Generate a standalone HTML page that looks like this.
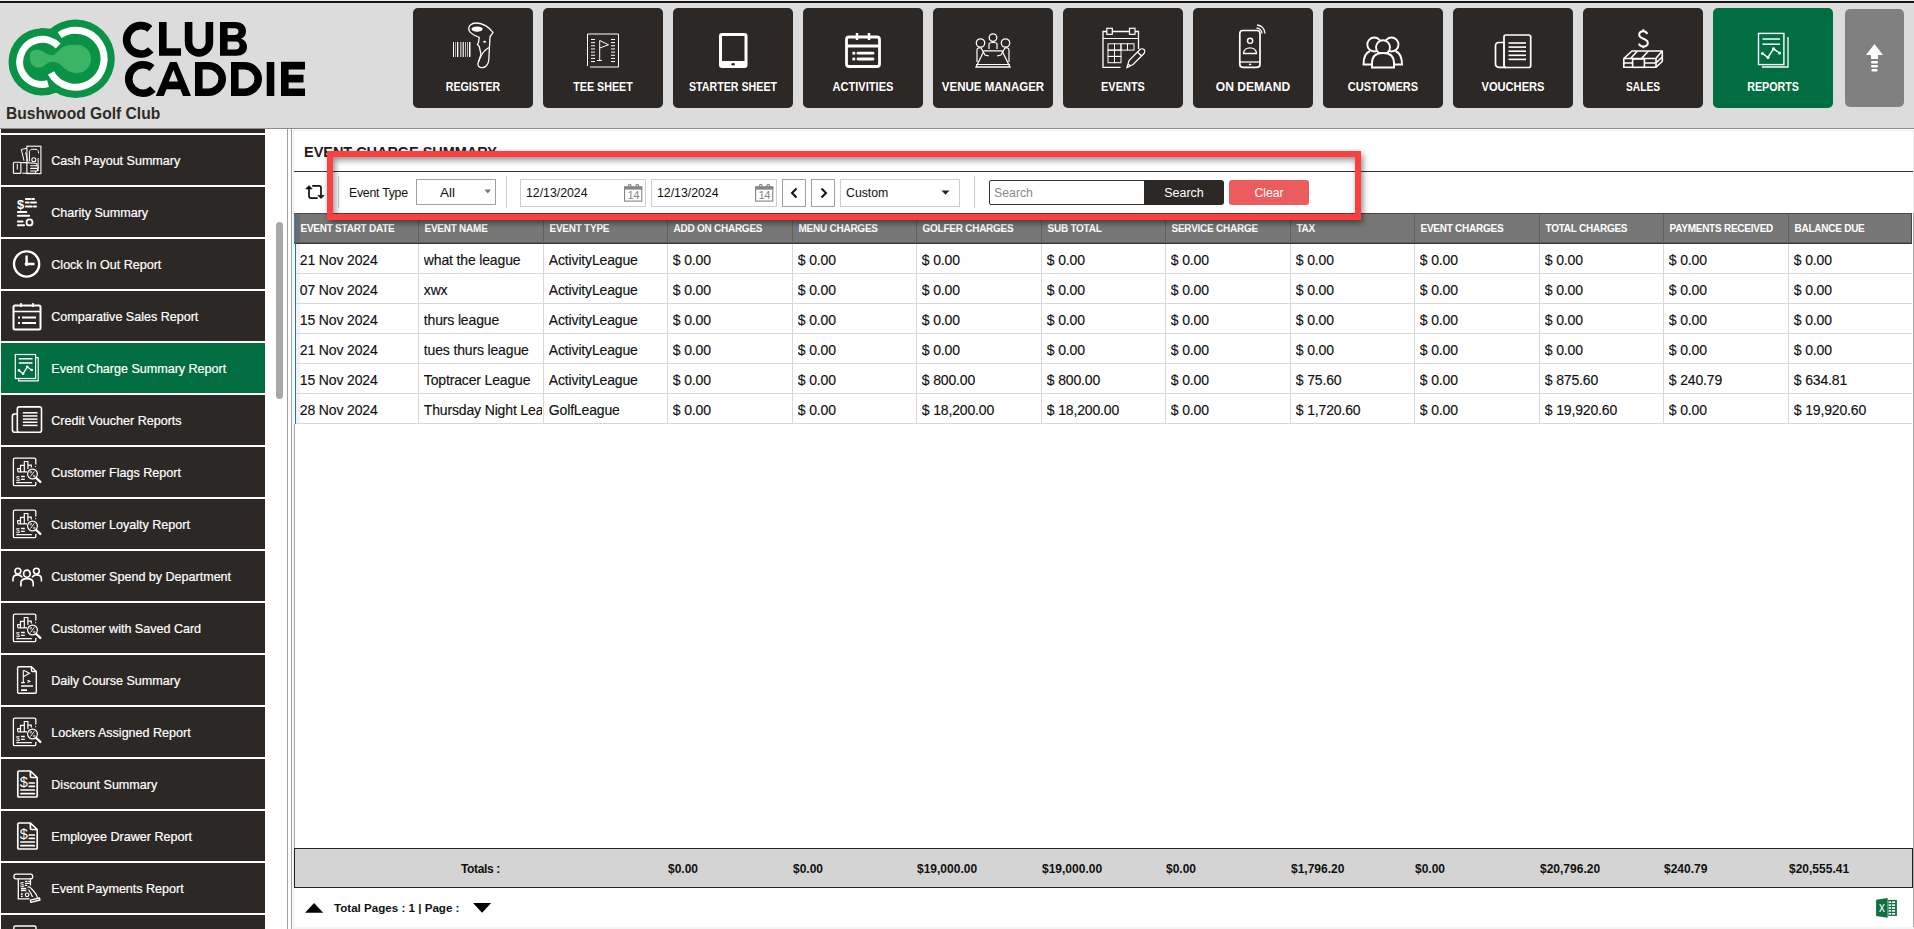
<!DOCTYPE html>
<html><head><meta charset="utf-8"><style>
*{margin:0;padding:0;box-sizing:border-box}
html,body{width:1914px;height:929px;overflow:hidden;background:#fff;font-family:"Liberation Sans", sans-serif}
.abs{position:absolute}
.nb{position:absolute;top:8px;width:120px;height:100px;border-radius:5px}
.nl{position:absolute;left:-20px;right:-20px;top:71px;text-align:center;color:#fff;font-size:13px;font-weight:bold;transform:scaleX(0.83);white-space:nowrap}
.si{position:absolute;left:1px;width:264px;height:50px}
.sl{position:absolute;left:50.3px;top:19px;color:#fff;font-size:12.6px;white-space:nowrap;letter-spacing:-0.03px;-webkit-text-stroke:0.2px #fff}
.th{position:absolute;top:223px;color:#fff;font-size:10px;font-weight:bold;white-space:nowrap;letter-spacing:-0.25px}
.td{position:absolute;height:30px;line-height:34px;color:#111;font-size:14px;letter-spacing:-0.15px;white-space:nowrap;overflow:hidden;-webkit-text-stroke:0.15px #111}
.tt{position:absolute;top:862px;font-size:12px;font-weight:bold;color:#111;white-space:nowrap}
.ft{position:absolute;font-size:11.6px;font-weight:bold;color:#111;white-space:nowrap}
.title{position:absolute;left:304px;top:144px;font-size:14.5px;font-weight:bold;color:#1f1c1a;white-space:nowrap;letter-spacing:-0.04px}
.lbl{position:absolute;font-size:12.3px;color:#111;white-space:nowrap}
.box{position:absolute;border:1px solid #ccc;background:#fff}
</style></head><body>
<div class="abs" style="left:0;top:0;width:1914px;height:1px;background:#f0f0f0"></div>
<div class="abs" style="left:0;top:1px;width:1914px;height:2px;background:#141414"></div>
<div class="abs" style="left:0;top:3px;width:1914px;height:125px;background:#dcdcdc"></div>
<div class="abs" style="left:0;top:128px;width:1914px;height:1px;background:#8c8c8c"></div>
<svg class="abs" style="left:0;top:0" width="320" height="128">
<circle cx="42.2" cy="61.9" r="33.7" fill="#0a9246"/><circle cx="75.6" cy="58.7" r="39.2" fill="#0a9246"/>
<path d="M40 28.2 L52 28.8 L68 22 L68 95 L52 92 L40 95.6 Z" fill="#0a9246"/>
<path d="M58.2 45.9 A 22.6 22.6 0 1 0 48.05 83.73" fill="none" stroke="#fff" stroke-width="7"/>
<path d="M59.66 35.07 A 28.5 28.5 0 1 1 50.92 72.95" fill="none" stroke="#fff" stroke-width="7"/>
<path d="M30.2 53 C32 50 36 49.5 39.5 50 C43 50.8 47 55 52 55.2 C56 55.2 59 49 64 46.5 C68 45 72 44.8 77 44.8 C85 45 91 51 91 59 C91 67 85 73 77 73 C71 73 66 70.5 62 66 C59 63 56 61.7 52.5 61.7 C47 61.7 44 67.5 39 67.6 C33 67.6 30 63 30 59 C30 56 30 55 30.2 53 Z" fill="#3bb565"/>
<g fill="none" stroke="#000" stroke-width="7.6">
<path d="M149.93 28.92 A 14.2 14.2 0 1 0 150.84 49.84"/>
<path d="M162.8 22 V51.95 H181"/>
<path d="M188.6 22 V42.5 A 10.4 10.4 0 0 0 209.4 42.5 V22"/>
<path d="M152.03 68.12 A 14.2 14.2 0 1 0 152.94 89.04"/>
<path d="M198.8 62 V92.2 H208.5 A 13.7 13.2 0 0 0 208.5 65.8 H195"/>
<path d="M234.8 62 V92.2 H244.5 A 13.7 13.2 0 0 0 244.5 65.8 H231"/>
<path d="M270.5 62 V96"/>
<path d="M284.8 62 V96 M281 65.6 H305 M281 78.6 H303.5 M281 92.3 H305"/>
</g>
<path d="M220 22 H235 C243 22 246 26.5 246 31 C246 35 244 37.5 241 38.5 C245 40 247 43 247 47 C247 52 243.5 55.8 236 55.8 H220 Z M227.6 28.3 V35 H234.5 C237 35 238.5 34 238.5 31.6 C238.5 29.5 237 28.3 234.5 28.3 Z M227.6 41.5 V49.4 H235.5 C238.5 49.4 239.6 47.6 239.6 45.4 C239.6 43.2 238.3 41.5 235.5 41.5 Z" fill="#000" fill-rule="evenodd"/>
<path d="M155.8 96 L170 62 H176.8 L191 96 H183 L180.3 89.2 H166.5 L163.8 96 Z M168.8 81.5 H178 L173.4 70 Z" fill="#000" fill-rule="evenodd"/>
</svg>
<div class="abs" style="left:6px;top:105px;font-size:15.6px;font-weight:bold;color:#2e2a25;white-space:nowrap">Bushwood Golf Club</div>
<div class="nb" style="left:413px;background:#2c2826"><span class="nl" style="transform:scaleX(0.817)">REGISTER</span></div>
<div class="nb" style="left:543px;background:#2c2826"><span class="nl" style="transform:scaleX(0.825)">TEE SHEET</span></div>
<div class="nb" style="left:673px;background:#2c2826"><span class="nl" style="transform:scaleX(0.82)">STARTER SHEET</span></div>
<div class="nb" style="left:803px;background:#2c2826"><span class="nl" style="transform:scaleX(0.852)">ACTIVITIES</span></div>
<div class="nb" style="left:933px;background:#2c2826"><span class="nl" style="transform:scaleX(0.886)">VENUE MANAGER</span></div>
<div class="nb" style="left:1063px;background:#2c2826"><span class="nl" style="transform:scaleX(0.844)">EVENTS</span></div>
<div class="nb" style="left:1193px;background:#2c2826"><span class="nl" style="transform:scaleX(0.928)">ON DEMAND</span></div>
<div class="nb" style="left:1323px;background:#2c2826"><span class="nl" style="transform:scaleX(0.85)">CUSTOMERS</span></div>
<div class="nb" style="left:1453px;background:#2c2826"><span class="nl" style="transform:scaleX(0.856)">VOUCHERS</span></div>
<div class="nb" style="left:1583px;background:#2c2826"><span class="nl" style="transform:scaleX(0.784)">SALES</span></div>
<div class="nb" style="left:1713px;background:#006e40"><span class="nl" style="transform:scaleX(0.821)">REPORTS</span></div>
<svg class="abs" style="left:0;top:0" width="1914" height="130"><rect x="453" y="42" width="1" height="15" fill="#fff"/><rect x="455" y="42" width="0.8" height="15" fill="#bbb"/><rect x="457" y="42" width="1.3" height="15" fill="#fff"/><rect x="460" y="42" width="1.5" height="15" fill="#aaa"/><rect x="462.5" y="42" width="1.5" height="15" fill="#ccc"/><rect x="465" y="42" width="1" height="15" fill="#bbb"/><rect x="467" y="42" width="0.8" height="15" fill="#ddd"/><rect x="469" y="42" width="1.5" height="15" fill="#fff"/><path d="M469.3 31 C467.5 26 471 23 476.5 23 C483 23 489.5 27.5 493 32.5 L490 36.8 L489.4 48 L488.8 60 C488.5 65 485 67.7 482 67.7 C479 67.7 477.5 65.5 478 63.5 C478.5 60 480.5 57 481 54.2 L479.2 46.3 L477.4 44.5 L478.6 42.1 L479.2 37.3 C476 36 472 35 469.3 31 Z" stroke="#fff" fill="none" stroke-width="1.3"/><ellipse cx="477.1" cy="29.1" rx="5.6" ry="2.7" fill="#fff"/><ellipse cx="484.6" cy="41.8" rx="1.5" ry="1" fill="#fff"/><path d="M489 47.5 C485 50 482.5 53 481.6 55 C480 58 479 60 478.6 62" stroke="#fff" fill="none" stroke-width="1.2"/><path d="M587.5 34 H618.5 V67 H590 M587.5 34 V66" stroke="#fff" fill="none" stroke-width="1"/><line x1="591" y1="39.5" x2="595" y2="39.5" stroke="#fff" stroke-width="1"/><line x1="611" y1="39.5" x2="615" y2="39.5" stroke="#fff" stroke-width="1"/><line x1="591" y1="42.65" x2="595" y2="42.65" stroke="#fff" stroke-width="1"/><line x1="611" y1="42.65" x2="615" y2="42.65" stroke="#fff" stroke-width="1"/><line x1="591" y1="45.8" x2="595" y2="45.8" stroke="#fff" stroke-width="1"/><line x1="611" y1="45.8" x2="615" y2="45.8" stroke="#fff" stroke-width="1"/><line x1="591" y1="48.95" x2="595" y2="48.95" stroke="#fff" stroke-width="1"/><line x1="611" y1="48.95" x2="615" y2="48.95" stroke="#fff" stroke-width="1"/><line x1="591" y1="52.1" x2="595" y2="52.1" stroke="#fff" stroke-width="1"/><line x1="611" y1="52.1" x2="615" y2="52.1" stroke="#fff" stroke-width="1"/><line x1="591" y1="55.25" x2="595" y2="55.25" stroke="#fff" stroke-width="1"/><line x1="611" y1="55.25" x2="615" y2="55.25" stroke="#fff" stroke-width="1"/><line x1="591" y1="58.4" x2="595" y2="58.4" stroke="#fff" stroke-width="1"/><line x1="611" y1="58.4" x2="615" y2="58.4" stroke="#fff" stroke-width="1"/><line x1="591" y1="61.55" x2="595" y2="61.55" stroke="#fff" stroke-width="1"/><line x1="611" y1="61.55" x2="615" y2="61.55" stroke="#fff" stroke-width="1"/><path d="M599.7 40.5 V60.5 M597 60.5 H602 M599.7 40.5 L608.5 44.8 L599.7 48" stroke="#fff" fill="none" stroke-width="1"/><rect x="719" y="33" width="28.5" height="35" rx="3" fill="#fff"/><rect x="722" y="36" width="22.5" height="25" fill="#2c2826"/><ellipse cx="733.2" cy="64.2" rx="1.8" ry="1.2" fill="#2c2826"/><rect x="846.5" y="37" width="33" height="29.5" rx="2.5" stroke="#fff" fill="none" stroke-width="2.8"/><line x1="846.5" y1="46" x2="879.5" y2="46" stroke="#fff" stroke-width="2.8"/><line x1="857" y1="33" x2="857" y2="40" stroke="#fff" stroke-width="2.5"/><line x1="869" y1="33" x2="869" y2="40" stroke="#fff" stroke-width="2.5"/><rect x="852.4" y="51.8" width="2.8" height="2.8" fill="#fff"/><rect x="852.4" y="57.6" width="2.8" height="2.8" fill="#fff"/><line x1="858" y1="53.2" x2="873" y2="53.2" stroke="#fff" stroke-width="2.8" stroke-linecap="round"/><line x1="858" y1="59" x2="873" y2="59" stroke="#fff" stroke-width="2.8" stroke-linecap="round"/><circle cx="980.5" cy="43" r="4.2" stroke="#fff" fill="none" stroke-width="1.3"/><circle cx="993" cy="37.6" r="3.8" stroke="#fff" fill="none" stroke-width="1.3"/><circle cx="1005.5" cy="43" r="4.2" stroke="#fff" fill="none" stroke-width="1.3"/><path d="M989 49 V44 C989 42 997 42 997 44 V49" stroke="#fff" fill="none" stroke-width="1.2"/><path d="M984 50.8 H1002 L1010 67 H976 Z" stroke="#fff" fill="none" stroke-width="1.3"/><line x1="976" y1="64.5" x2="1010" y2="64.5" stroke="#fff" stroke-width="1"/><path d="M977 62 V50 C977 48 979 47.5 981 48 L985 55 L989 56 M1009 62 V50 C1009 48 1007 47.5 1005 48 L1001 55 L997 56" stroke="#fff" fill="none" stroke-width="1.2"/><path d="M1120.5 67.3 H1103 V31.5 H1138.5 V49" stroke="#fff" fill="none" stroke-width="1.3"/><line x1="1103" y1="38.5" x2="1138.5" y2="38.5" stroke="#fff" stroke-width="1.2"/><rect x="1106.8" y="28.3" width="5.5" height="6" fill="#2c2826" stroke="#fff" fill="none" stroke-width="1.2"/><rect x="1129.5" y="28.3" width="5.5" height="6" fill="#2c2826" stroke="#fff" fill="none" stroke-width="1.2"/><rect x="1108.0" y="43.8" width="6.5" height="6.3" stroke="#fff" fill="none" stroke-width="1"/><rect x="1114.5" y="43.8" width="6.5" height="6.3" stroke="#fff" fill="none" stroke-width="1"/><rect x="1121.0" y="43.8" width="6.5" height="6.3" stroke="#fff" fill="none" stroke-width="1"/><rect x="1127.5" y="43.8" width="6.5" height="6.3" stroke="#fff" fill="none" stroke-width="1"/><rect x="1108.0" y="50.099999999999994" width="6.5" height="6.3" stroke="#fff" fill="none" stroke-width="1"/><rect x="1114.5" y="50.099999999999994" width="6.5" height="6.3" stroke="#fff" fill="none" stroke-width="1"/><rect x="1108.0" y="56.4" width="6.5" height="6.3" stroke="#fff" fill="none" stroke-width="1"/><rect x="1114.5" y="56.4" width="6.5" height="6.3" stroke="#fff" fill="none" stroke-width="1"/><path d="M1127 67.5 L1129 60.5 L1140 49.5 C1141 48.5 1143 48.5 1144 49.5 C1145 50.5 1145 52.5 1144 53.5 L1133 64.5 Z M1128 64 L1131 66 M1137.5 52 L1141.5 56" stroke="#fff" fill="none" stroke-width="1.2"/><rect x="1239.8" y="30.5" width="20.2" height="36.8" rx="3" stroke="#fff" fill="none" stroke-width="1.7"/><line x1="1240" y1="62" x2="1260" y2="62" stroke="#fff" stroke-width="1.3"/><ellipse cx="1250.1" cy="64.4" rx="1.3" ry="0.8" fill="#fff"/><circle cx="1250.1" cy="40.8" r="2.6" stroke="#fff" fill="none" stroke-width="1.4"/><path d="M1243.6 53.5 C1243.6 46 1256.4 46 1256.4 53.5 Z" stroke="#fff" fill="none" stroke-width="1.4"/><path d="M1257 25 A 8.5 8.5 0 0 1 1265 33.5 M1256.5 28 A 5.5 5.5 0 0 1 1262 33.5" stroke="#fff" fill="none" stroke-width="1.3"/><circle cx="1374.3" cy="44.5" r="7" stroke="#fff" fill="none" stroke-width="1.9"/><circle cx="1391.5" cy="44.5" r="7" stroke="#fff" fill="none" stroke-width="1.9"/><path d="M1370 51 C1365 53 1363.5 58 1363.5 64.5 H1372 M1395.5 51 C1400.5 53 1402 58 1402 64.5 H1394" stroke="#fff" fill="none" stroke-width="1.9"/><circle cx="1383" cy="47.3" r="7" fill="#2c2826" stroke="#fff" fill="none" stroke-width="1.9"/><path d="M1372 67.5 V63 C1372 55.5 1377 53 1383 53 C1389 53 1394 55.5 1394 63 V67.5 Z" fill="#2c2826" stroke="#fff" fill="none" stroke-width="1.9"/><rect x="1504" y="35" width="26.7" height="32.5" rx="2" stroke="#fff" fill="none" stroke-width="1.7"/><path d="M1504 42.5 H1499 C1496.5 42.5 1495.5 44 1495.5 46 V64 C1495.5 66.5 1497 67.3 1499.5 67.3 H1506" stroke="#fff" fill="none" stroke-width="1.7"/><path d="M1504 42 V66" stroke="#fff" fill="none" stroke-width="1.2"/><line x1="1508.5" y1="43.0" x2="1526" y2="43.0" stroke="#fff" stroke-width="1.6"/><line x1="1508.5" y1="47.1" x2="1526" y2="47.1" stroke="#fff" stroke-width="1.6"/><line x1="1508.5" y1="51.2" x2="1526" y2="51.2" stroke="#fff" stroke-width="1.6"/><line x1="1508.5" y1="55.3" x2="1526" y2="55.3" stroke="#fff" stroke-width="1.6"/><line x1="1508.5" y1="59.4" x2="1526" y2="59.4" stroke="#fff" stroke-width="1.6"/><path d="M1647.3 34 C1646.5 32.2 1645 31.3 1643.3 31.3 C1640.8 31.3 1639.2 32.8 1639.2 34.8 C1639.2 37.2 1641.3 38 1643.5 38.7 C1646 39.5 1647.8 40.5 1647.8 43.1 C1647.8 45.2 1646 46.5 1643.3 46.5 C1641 46.5 1639.5 45.3 1638.8 43.6 M1643.3 29.3 V31.3 M1643.3 46.5 V48.3" stroke="#fff" fill="none" stroke-width="2"/><path d="M1623.8 58.5 L1632 51 H1662.3 L1655.8 58.5 Z M1637.5 51 L1630.5 58.5 M1648.5 51 L1641.5 58.5" stroke="#fff" fill="none" stroke-width="1.6" stroke-linejoin="round"/><path d="M1623.8 58.5 V67.3 H1656 L1662.6 61 M1623.8 63 H1656 L1662.6 56.5 M1656 58.5 V67.3 M1662.3 51 V61" stroke="#fff" fill="none" stroke-width="1.6"/><rect x="1632.6" y="59" width="11.8" height="8.3" fill="#2c2826" stroke="#fff" fill="none" stroke-width="1.6"/><path d="M1762 67 H1788 V37" stroke="#fff" fill="none" stroke-width="1.3"/><rect x="1758.5" y="33.4" width="25.4" height="31.2" stroke="#fff" fill="none" stroke-width="1.4"/><line x1="1762.5" y1="39" x2="1780" y2="39" stroke="#fff" stroke-width="1.5"/><line x1="1762.5" y1="44.2" x2="1780" y2="44.2" stroke="#fff" stroke-width="1.5"/><path d="M1762.5 53.5 L1768 57.5 L1773.5 48.8 L1779.5 53" stroke="#fff" fill="none" stroke-width="1.5"/><circle cx="1762.5" cy="53.5" r="1.6" fill="#fff"/><circle cx="1768" cy="57.5" r="1.6" fill="#fff"/><circle cx="1773.5" cy="48.8" r="1.6" fill="#fff"/><circle cx="1779.5" cy="53" r="1.6" fill="#fff"/></svg>
<div class="abs" style="left:1845px;top:9px;width:59px;height:98px;background:#808080;border-radius:5px"></div>
<svg class="abs" style="left:1845px;top:9px" width="59" height="98"><path d="M29.5 35 L38 46 H33 V50 H26 V46 H21 Z" fill="#fff"/><rect x="26" y="52" width="7" height="2.5" rx="1.2" fill="#fff"/><rect x="26" y="56" width="7" height="2.5" rx="1.2" fill="#fff"/><rect x="26.5" y="60" width="6" height="2.5" rx="1.2" fill="#fff"/></svg>
<div class="abs" style="left:1px;top:129px;width:264px;height:4px;background:#2c2826"></div>
<div class="si" style="top:135px;background:#2c2826"><span class="sl">Cash Payout Summary</span></div>
<div class="si" style="top:187px;background:#2c2826"><span class="sl">Charity Summary</span></div>
<div class="si" style="top:239px;background:#2c2826"><span class="sl">Clock In Out Report</span></div>
<div class="si" style="top:291px;background:#2c2826"><span class="sl">Comparative Sales Report</span></div>
<div class="si" style="top:343px;background:#006e40"><span class="sl">Event Charge Summary Report</span></div>
<div class="si" style="top:395px;background:#2c2826"><span class="sl">Credit Voucher Reports</span></div>
<div class="si" style="top:447px;background:#2c2826"><span class="sl">Customer Flags Report</span></div>
<div class="si" style="top:499px;background:#2c2826"><span class="sl">Customer Loyalty Report</span></div>
<div class="si" style="top:551px;background:#2c2826"><span class="sl">Customer Spend by Department</span></div>
<div class="si" style="top:603px;background:#2c2826"><span class="sl">Customer with Saved Card</span></div>
<div class="si" style="top:655px;background:#2c2826"><span class="sl">Daily Course Summary</span></div>
<div class="si" style="top:707px;background:#2c2826"><span class="sl">Lockers Assigned Report</span></div>
<div class="si" style="top:759px;background:#2c2826"><span class="sl">Discount Summary</span></div>
<div class="si" style="top:811px;background:#2c2826"><span class="sl">Employee Drawer Report</span></div>
<div class="si" style="top:863px;background:#2c2826"><span class="sl">Event Payments Report</span></div>
<div class="abs" style="left:1px;top:915px;width:264px;height:14px;background:#2c2826"></div>
<svg class="abs" style="left:0;top:0" width="270" height="929"><g transform="translate(0,0)"><rect x="26.9" y="146.2" width="14" height="27.4" fill="none" stroke="#fff" stroke-width="1.1"/><path d="M29.4 161.5 V151.6 C30 150 31 149.3 32 149.3 H36 C37.5 149.3 38.6 151 38.6 153.3" fill="none" stroke="#fff" stroke-width="1"/><circle cx="33.8" cy="159.8" r="2" fill="none" stroke="#fff" stroke-width="1.1"/><path d="M27 148.2 L21.3 149.5 L24 160.7 M25.6 152.5 L27.8 161.5" fill="none" stroke="#fff" stroke-width="1"/><path d="M38.1 158 V171" fill="none" stroke="#fff" stroke-width="1"/><rect x="13.4" y="162.2" width="7.5" height="11.2" rx="1" fill="none" stroke="#fff" stroke-width="1.1"/><path d="M17.3 163.8 V169.5" fill="none" stroke="#fff" stroke-width="1"/><path d="M20.9 162.8 L24 162.6 L35.5 163.2 C37 163.3 37.5 165 36 165.8 M30.2 165.8 H37.2 C38.6 165.8 38.6 168.4 37.2 168.4 H30.2 M30.2 168.4 H36.6 C38 168.4 38 171 36.6 171 H30.2 M22.2 173.2 H35.6 L36 171" fill="none" stroke="#fff" stroke-width="1.1"/></g><g transform="translate(0,0)"><text x="20.7" y="208.6" font-family="Liberation Sans" font-weight="bold" font-size="13" fill="#fff" text-anchor="middle">$</text><path d="M25.9 198.9 H30.2 M32.1 198.9 H34 M25.9 202.5 H28.7 M31 202.5 H36 M25.9 206.4 H31.7 M33.8 206.4 H36 M17.9 211.9 H26.3 M17.9 215.8 H29.1 M17.9 221.4 H22.6 M17.9 225.2 H24.1" fill="none" stroke="#fff" stroke-width="2" stroke-linecap="round"/><circle cx="29.5" cy="222.4" r="3" fill="none" stroke="#fff" stroke-width="1.8"/></g><circle cx="26.6" cy="264" r="12.6" fill="none" stroke="#fff" stroke-width="2.4"/><path d="M26.6 255.5 V264 H34.5" fill="none" stroke="#fff" stroke-width="2.4"/><circle cx="26.6" cy="264" r="2" fill="#fff"/><g transform="translate(12,302)"><rect x="1.5" y="3.5" width="27" height="24" rx="1.5" fill="none" stroke="#fff" stroke-width="2"/><line x1="1.5" y1="9.5" x2="28.5" y2="9.5" stroke="#fff" stroke-width="1.6"/><path d="M9 1 V5 M21 1 V5" fill="none" stroke="#fff" stroke-width="1.6"/><path d="M6 15.5 H8 M10 15.5 H24 M6 21 H8 M10 21 H24" fill="none" stroke="#fff" stroke-width="2"/></g><g transform="translate(0,0)"><rect x="15.3" y="354.5" width="20.3" height="24" fill="none" stroke="#fff" stroke-width="1.2"/><path d="M36 357.6 H38.2 V380.9 H18.6 V379" fill="none" stroke="#fff" stroke-width="1.1"/><path d="M18.8 358.8 H32.5 M18.8 362.9 H32.5" fill="none" stroke="#fff" stroke-width="1.5"/><path d="M19 370.4 L23.1 373.8 L27.2 366.9 L31.7 370" fill="none" stroke="#fff" stroke-width="1.3"/><circle cx="19" cy="370.4" r="1.3" fill="#fff"/><circle cx="23.1" cy="373.8" r="1.3" fill="#fff"/><circle cx="27.2" cy="366.9" r="1.3" fill="#fff"/><circle cx="31.7" cy="370" r="1.3" fill="#fff"/></g><rect x="17.3" y="406.9" width="24.2" height="25.4" rx="2" fill="none" stroke="#fff" stroke-width="1.6"/><path d="M17.3 414 H14.5 C13 414 12.4 415 12.4 416.5 V430 C12.4 431.5 13.3 432.3 15 432.3 H18.5" fill="none" stroke="#fff" stroke-width="1.6"/><line x1="22.8" y1="412.80" x2="37.5" y2="412.80" stroke="#fff" stroke-width="1.5"/><line x1="22.8" y1="415.95" x2="37.5" y2="415.95" stroke="#fff" stroke-width="1.5"/><line x1="22.8" y1="419.10" x2="37.5" y2="419.10" stroke="#fff" stroke-width="1.5"/><line x1="22.8" y1="422.25" x2="37.5" y2="422.25" stroke="#fff" stroke-width="1.5"/><line x1="22.8" y1="425.40" x2="37.5" y2="425.40" stroke="#fff" stroke-width="1.5"/><g transform="translate(0,0)"><path d="M35.8 464.5 V459.4 C35.8 458.6 35.2 458.2 34.4 458.2 H14.8 C14 458.2 13.4 458.6 13.4 459.4 V484.4 C13.4 485.2 14 485.6 14.8 485.6 H34.4 C35.2 485.6 35.8 485.2 35.8 484.4 V482" fill="none" stroke="#fff" stroke-width="1.3"/><path d="M17.7 471.6 V468.6 H20.5 M20.5 471.6 V465.3 H24.3 V471.6 M24.3 465.3 V461.5 H27.9 V469 M27.9 465.2 H31.3 V467.5 M17.7 471.8 H27" fill="none" stroke="#fff" stroke-width="1.2"/><text x="17.9" y="480.6" font-family="Liberation Sans" font-size="7" fill="#fff" text-anchor="middle">$</text><path d="M21.1 476.5 H24.8 M21.1 479.3 H24.8 M16.2 482.6 H31.9" fill="none" stroke="#fff" stroke-width="1.3"/><circle cx="32.5" cy="474" r="4.9" fill="none" stroke="#fff" stroke-width="1.2"/><path d="M36.2 478 L40.3 481.9" fill="none" stroke="#fff" stroke-width="2.4" stroke-linecap="round"/><path d="M30.5 476.5 L34.3 471.3" fill="none" stroke="#fff" stroke-width="0.9"/><circle cx="30.8" cy="472.1" r="0.9" fill="none" stroke="#fff" stroke-width="0.7"/><circle cx="34.2" cy="476" r="0.9" fill="none" stroke="#fff" stroke-width="0.7"/><circle cx="35.6" cy="466.6" r="0.6" fill="#fff"/></g><g transform="translate(0,52)"><path d="M35.8 464.5 V459.4 C35.8 458.6 35.2 458.2 34.4 458.2 H14.8 C14 458.2 13.4 458.6 13.4 459.4 V484.4 C13.4 485.2 14 485.6 14.8 485.6 H34.4 C35.2 485.6 35.8 485.2 35.8 484.4 V482" fill="none" stroke="#fff" stroke-width="1.3"/><path d="M17.7 471.6 V468.6 H20.5 M20.5 471.6 V465.3 H24.3 V471.6 M24.3 465.3 V461.5 H27.9 V469 M27.9 465.2 H31.3 V467.5 M17.7 471.8 H27" fill="none" stroke="#fff" stroke-width="1.2"/><text x="17.9" y="480.6" font-family="Liberation Sans" font-size="7" fill="#fff" text-anchor="middle">$</text><path d="M21.1 476.5 H24.8 M21.1 479.3 H24.8 M16.2 482.6 H31.9" fill="none" stroke="#fff" stroke-width="1.3"/><circle cx="32.5" cy="474" r="4.9" fill="none" stroke="#fff" stroke-width="1.2"/><path d="M36.2 478 L40.3 481.9" fill="none" stroke="#fff" stroke-width="2.4" stroke-linecap="round"/><path d="M30.5 476.5 L34.3 471.3" fill="none" stroke="#fff" stroke-width="0.9"/><circle cx="30.8" cy="472.1" r="0.9" fill="none" stroke="#fff" stroke-width="0.7"/><circle cx="34.2" cy="476" r="0.9" fill="none" stroke="#fff" stroke-width="0.7"/><circle cx="35.6" cy="466.6" r="0.6" fill="#fff"/></g><g transform="translate(0,0)"><circle cx="17.9" cy="571.1" r="2.9" fill="none" stroke="#fff" stroke-width="1.6"/><circle cx="36.4" cy="571.1" r="2.9" fill="none" stroke="#fff" stroke-width="1.6"/><path d="M13 581 V579 C13 576.5 15 574.9 17.9 574.9 C19.5 574.9 20.8 575.6 21.8 576.8 M41.4 581 V579 C41.4 576.5 39.4 574.9 36.4 574.9 C34.8 574.9 33.5 575.6 32.5 576.8" fill="none" stroke="#fff" stroke-width="1.6" stroke-linecap="round"/><ellipse cx="26.9" cy="573.7" rx="3.3" ry="3.6" fill="none" stroke="#fff" stroke-width="1.7"/><path d="M20.9 585.7 V583 C20.9 580.3 23 578.6 26.9 578.6 C30.8 578.6 33.2 580.3 33.2 583 V585.7" fill="none" stroke="#fff" stroke-width="1.7" stroke-linecap="round"/></g><g transform="translate(0,156)"><path d="M35.8 464.5 V459.4 C35.8 458.6 35.2 458.2 34.4 458.2 H14.8 C14 458.2 13.4 458.6 13.4 459.4 V484.4 C13.4 485.2 14 485.6 14.8 485.6 H34.4 C35.2 485.6 35.8 485.2 35.8 484.4 V482" fill="none" stroke="#fff" stroke-width="1.3"/><path d="M17.7 471.6 V468.6 H20.5 M20.5 471.6 V465.3 H24.3 V471.6 M24.3 465.3 V461.5 H27.9 V469 M27.9 465.2 H31.3 V467.5 M17.7 471.8 H27" fill="none" stroke="#fff" stroke-width="1.2"/><text x="17.9" y="480.6" font-family="Liberation Sans" font-size="7" fill="#fff" text-anchor="middle">$</text><path d="M21.1 476.5 H24.8 M21.1 479.3 H24.8 M16.2 482.6 H31.9" fill="none" stroke="#fff" stroke-width="1.3"/><circle cx="32.5" cy="474" r="4.9" fill="none" stroke="#fff" stroke-width="1.2"/><path d="M36.2 478 L40.3 481.9" fill="none" stroke="#fff" stroke-width="2.4" stroke-linecap="round"/><path d="M30.5 476.5 L34.3 471.3" fill="none" stroke="#fff" stroke-width="0.9"/><circle cx="30.8" cy="472.1" r="0.9" fill="none" stroke="#fff" stroke-width="0.7"/><circle cx="34.2" cy="476" r="0.9" fill="none" stroke="#fff" stroke-width="0.7"/><circle cx="35.6" cy="466.6" r="0.6" fill="#fff"/></g><g transform="translate(0,0)"><path d="M31.5 666.8 H18.8 C18 666.8 17.6 667.3 17.6 668 V692.2 C17.6 693 18 693.3 18.8 693.3 H35.1 C35.9 693.3 36.3 693 36.3 692.2 V671.5 Z M31.5 666.8 V670.5 C31.5 671.3 31.9 671.5 32.6 671.5 H36.3" fill="none" stroke="#fff" stroke-width="1.4" stroke-linejoin="round"/><path d="M23.3 670.3 V682.4 M21.1 682.6 H24.8 M23.7 670.3 L29.5 673.3 L23.7 676.4 M27.5 680.2 L29.8 681.3 L27.5 682.4" fill="none" stroke="#fff" stroke-width="1.1"/><path d="M21.1 686 H33 M21.1 690.1 H27" fill="none" stroke="#fff" stroke-width="1.6"/></g><g transform="translate(0,260)"><path d="M35.8 464.5 V459.4 C35.8 458.6 35.2 458.2 34.4 458.2 H14.8 C14 458.2 13.4 458.6 13.4 459.4 V484.4 C13.4 485.2 14 485.6 14.8 485.6 H34.4 C35.2 485.6 35.8 485.2 35.8 484.4 V482" fill="none" stroke="#fff" stroke-width="1.3"/><path d="M17.7 471.6 V468.6 H20.5 M20.5 471.6 V465.3 H24.3 V471.6 M24.3 465.3 V461.5 H27.9 V469 M27.9 465.2 H31.3 V467.5 M17.7 471.8 H27" fill="none" stroke="#fff" stroke-width="1.2"/><text x="17.9" y="480.6" font-family="Liberation Sans" font-size="7" fill="#fff" text-anchor="middle">$</text><path d="M21.1 476.5 H24.8 M21.1 479.3 H24.8 M16.2 482.6 H31.9" fill="none" stroke="#fff" stroke-width="1.3"/><circle cx="32.5" cy="474" r="4.9" fill="none" stroke="#fff" stroke-width="1.2"/><path d="M36.2 478 L40.3 481.9" fill="none" stroke="#fff" stroke-width="2.4" stroke-linecap="round"/><path d="M30.5 476.5 L34.3 471.3" fill="none" stroke="#fff" stroke-width="0.9"/><circle cx="30.8" cy="472.1" r="0.9" fill="none" stroke="#fff" stroke-width="0.7"/><circle cx="34.2" cy="476" r="0.9" fill="none" stroke="#fff" stroke-width="0.7"/><circle cx="35.6" cy="466.6" r="0.6" fill="#fff"/></g><g transform="translate(0,0)"><path d="M30.4 771 H19 C18.2 771 17.8 771.4 17.8 772.2 V796 C17.8 796.7 18.2 797 19 797 H36 C36.8 797 37.2 796.7 37.2 796 V777.5 Z M30.4 771 V776.2 C30.4 777 30.8 777.5 31.6 777.5 H37.2" fill="none" stroke="#fff" stroke-width="1.7" stroke-linejoin="round"/><text x="23.9" y="786.8" font-family="Liberation Sans" font-size="14.5" fill="#fff" text-anchor="middle">$</text><path d="M29.3 783 H34.3 M29.3 786.4 H34.3 M20.9 790 H34.3 M20.9 793.7 H34.3" fill="none" stroke="#fff" stroke-width="1.7" stroke-linecap="round"/></g><g transform="translate(0,52)"><path d="M30.4 771 H19 C18.2 771 17.8 771.4 17.8 772.2 V796 C17.8 796.7 18.2 797 19 797 H36 C36.8 797 37.2 796.7 37.2 796 V777.5 Z M30.4 771 V776.2 C30.4 777 30.8 777.5 31.6 777.5 H37.2" fill="none" stroke="#fff" stroke-width="1.7" stroke-linejoin="round"/><text x="23.9" y="786.8" font-family="Liberation Sans" font-size="14.5" fill="#fff" text-anchor="middle">$</text><path d="M29.3 783 H34.3 M29.3 786.4 H34.3 M20.9 790 H34.3 M20.9 793.7 H34.3" fill="none" stroke="#fff" stroke-width="1.7" stroke-linecap="round"/></g><g transform="translate(0,0)"><path d="M18.3 878.9 H15.8 C14.5 878.9 13.9 878 13.9 876.5 C13.9 875 14.7 874.1 16 874.1 H30.8 C32 874.1 32.7 875 32.7 876.5 C32.7 878 32 878.9 30.8 878.9 H18.3 V898.8 H29.5" fill="none" stroke="#fff" stroke-width="1.3"/><path d="M30.5 878.9 V885.5" fill="none" stroke="#fff" stroke-width="1.2"/><text x="22.2" y="886.8" font-family="Liberation Sans" font-size="7.5" fill="#fff" text-anchor="middle">$</text><path d="M25.1 881.3 H27.5 M28.3 881.3 H30.2 M25.1 883.3 H30.2 M25.1 885.3 H27.2 M20.9 888.5 H26.3 M20.9 890.5 H26.3 M20.9 894 H22.8 M20.9 896.4 H22.8" fill="none" stroke="#fff" stroke-width="1.3"/><circle cx="27.1" cy="894.8" r="1.8" fill="none" stroke="#fff" stroke-width="1.2"/><path d="M27.5 887.2 C28.8 886.5 30 887 31 888.2 L33.5 891 C35.5 893 37 895.5 37.5 898 M28.5 889.5 C30 891.5 31.5 894 32.5 897" fill="none" stroke="#fff" stroke-width="1.2"/><path d="M30.3 900.2 L39.5 898 L40 900 L30.8 902.3 Z" fill="none" stroke="#fff" stroke-width="1.3" stroke-linejoin="round"/></g><path d="M13.8 929 V927.6 C13.8 926.6 14.4 926 15.3 926 H34.5 C35.4 926 36 926.6 36 927.6 V929" fill="none" stroke="#fff" stroke-width="1.4"/></svg>
<div class="abs" style="left:276px;top:222px;width:7px;height:177px;background:#a8a8a8;border-radius:4px"></div>
<div class="abs" style="left:287px;top:129px;width:1px;height:800px;background:#a0a0a0"></div>
<div class="abs" style="left:291px;top:129px;width:1px;height:800px;background:#a0a0a0"></div>
<div class="abs" style="left:293px;top:130px;width:1621px;height:799px;background:#fff;border-left:1px solid #eee;border-top:1px solid #eee"></div>
<div class="title">EVENT CHARGE SUMMARY</div>
<div class="abs" style="left:1913px;top:130px;width:1px;height:83px;background:#ececec"></div>
<div class="abs" style="left:294px;top:171px;width:1619px;height:1px;background:#333"></div>
<svg class="abs" style="left:296px;top:176px" width="32" height="30"><path d="M13 12.5 V20 C13 21.5 13.8 22.2 15.3 22.2 H21.7 M16.2 9.8 H23 C24.3 9.8 25 10.5 25 11.8 V19.5" fill="none" stroke="#111" stroke-width="1.7"/><path d="M9.8 12.9 L13 9.6 L16.2 12.9 Z M21.9 19.4 H28.1 L25 22.5 Z" fill="#111" stroke="#111" stroke-width="0.8" stroke-linejoin="round"/></svg>
<div class="abs" style="left:338px;top:176px;width:1px;height:32px;background:#ccc"></div>
<div class="lbl" style="left:349px;top:186px;letter-spacing:-0.25px">Event Type</div>
<div class="box" style="left:416px;top:179px;width:80px;height:26px;border-color:#a0a0a0"></div>
<div class="lbl" style="left:440px;top:185px;font-size:13.5px">All</div>
<svg class="abs" style="left:484px;top:189px" width="8" height="6"><path d="M0.5 0.5 H7 L3.75 4.5 Z" fill="#777"/></svg>
<div class="abs" style="left:506px;top:176px;width:1px;height:32px;background:#ccc"></div>
<div class="box" style="left:520px;top:179px;width:126px;height:28px;border-color:#cfcfcf"></div>
<div class="lbl" style="left:526px;top:186px">12/13/2024</div>
<svg class="abs" style="left:623px;top:183px" width="20" height="20"><rect x="1.55" y="4" width="17.2" height="14.1" fill="none" stroke="#858585" stroke-width="1.1"/><rect x="1" y="3.4" width="18.3" height="3.2" fill="#858585"/><path d="M5.5 4 V2.6 C5.5 1 8 1 8 2.6 V4 M13 4 V2.6 C13 1 15.5 1 15.5 2.6 V4" fill="none" stroke="#858585" stroke-width="1.1"/><text x="10.3" y="16.4" font-family="Liberation Sans" font-size="11.3" fill="#858585" text-anchor="middle" letter-spacing="-0.6">14</text></svg>
<div class="box" style="left:651px;top:179px;width:126px;height:28px;border-color:#cfcfcf"></div>
<div class="lbl" style="left:657px;top:186px">12/13/2024</div>
<svg class="abs" style="left:754px;top:183px" width="20" height="20"><rect x="1.55" y="4" width="17.2" height="14.1" fill="none" stroke="#858585" stroke-width="1.1"/><rect x="1" y="3.4" width="18.3" height="3.2" fill="#858585"/><path d="M5.5 4 V2.6 C5.5 1 8 1 8 2.6 V4 M13 4 V2.6 C13 1 15.5 1 15.5 2.6 V4" fill="none" stroke="#858585" stroke-width="1.1"/><text x="10.3" y="16.4" font-family="Liberation Sans" font-size="11.3" fill="#858585" text-anchor="middle" letter-spacing="-0.6">14</text></svg>
<div class="box" style="left:782px;top:179px;width:24px;height:28px;border-color:#a0a0a0"></div>
<svg class="abs" style="left:782px;top:179px" width="24" height="28"><path d="M14.5 9.5 L10 14 L14.5 18.5" fill="none" stroke="#111" stroke-width="2"/></svg>
<div class="box" style="left:811px;top:179px;width:24px;height:28px;border-color:#a0a0a0"></div>
<svg class="abs" style="left:811px;top:179px" width="24" height="28"><path d="M10.5 9.5 L15 14 L10.5 18.5" fill="none" stroke="#111" stroke-width="2"/></svg>
<div class="box" style="left:840px;top:179px;width:120px;height:28px;border-color:#cfcfcf"></div>
<div class="lbl" style="left:846px;top:186px">Custom</div>
<svg class="abs" style="left:941px;top:190px" width="10" height="6"><path d="M0.5 0.5 H8.5 L4.5 4.8 Z" fill="#222"/></svg>
<div class="abs" style="left:974px;top:176px;width:1px;height:32px;background:#ccc"></div>
<div class="box" style="left:989px;top:180px;width:160px;height:25px;border-color:#333;border-radius:2px 0 0 2px"></div>
<div class="lbl" style="left:994px;top:186px;color:#8a8a8a">Search</div>
<div class="abs" style="left:1144px;top:180px;width:80px;height:25px;background:#2c2826;border-radius:0 3px 3px 0;color:#fff;font-size:12.5px;font-family:&quot;Liberation Sans&quot;, sans-serif;line-height:27px;text-align:center">Search</div>
<div class="abs" style="left:1229px;top:180px;width:80px;height:25px;background:#ea5c5e;border-radius:3px;color:#fff;font-size:12.2px;font-family:&quot;Liberation Sans&quot;, sans-serif;line-height:26px;text-align:center">Clear</div>
<div class="abs" style="left:294px;top:213px;width:1618px;height:31px;background:#777;border-top:1px solid #4a4a4a;border-bottom:1px solid #383838"></div>
<div class="abs" style="left:294px;top:242px;width:1618px;height:1px;background:#5c5c5c"></div>
<div class="abs" style="left:296px;top:244px;width:4px;height:179px;background:#f3f3f3"></div>
<div class="abs" style="left:296px;top:214px;width:4px;height:28px;background:#6c6c6c"></div>
<div class="abs" style="left:295px;top:213px;width:1px;height:211px;background:#1f74c0"></div>
<div class="abs" style="left:294px;top:424px;width:1px;height:424px;background:#acacac"></div>
<div class="th" style="left:300.5px">EVENT START DATE</div>
<div class="th" style="left:424.5px">EVENT NAME</div>
<div class="abs" style="left:418px;top:214px;width:1px;height:28px;background:#606060"></div>
<div class="abs" style="left:418px;top:244px;width:1px;height:180px;background:#d8d8d8"></div>
<div class="th" style="left:549.5px">EVENT TYPE</div>
<div class="abs" style="left:543px;top:214px;width:1px;height:28px;background:#606060"></div>
<div class="abs" style="left:543px;top:244px;width:1px;height:180px;background:#d8d8d8"></div>
<div class="th" style="left:673.5px">ADD ON CHARGES</div>
<div class="abs" style="left:667px;top:214px;width:1px;height:28px;background:#606060"></div>
<div class="abs" style="left:667px;top:244px;width:1px;height:180px;background:#d8d8d8"></div>
<div class="th" style="left:798.5px">MENU CHARGES</div>
<div class="abs" style="left:792px;top:214px;width:1px;height:28px;background:#606060"></div>
<div class="abs" style="left:792px;top:244px;width:1px;height:180px;background:#d8d8d8"></div>
<div class="th" style="left:922.5px">GOLFER CHARGES</div>
<div class="abs" style="left:916px;top:214px;width:1px;height:28px;background:#606060"></div>
<div class="abs" style="left:916px;top:244px;width:1px;height:180px;background:#d8d8d8"></div>
<div class="th" style="left:1047.5px">SUB TOTAL</div>
<div class="abs" style="left:1041px;top:214px;width:1px;height:28px;background:#606060"></div>
<div class="abs" style="left:1041px;top:244px;width:1px;height:180px;background:#d8d8d8"></div>
<div class="th" style="left:1171.5px">SERVICE CHARGE</div>
<div class="abs" style="left:1165px;top:214px;width:1px;height:28px;background:#606060"></div>
<div class="abs" style="left:1165px;top:244px;width:1px;height:180px;background:#d8d8d8"></div>
<div class="th" style="left:1296.5px">TAX</div>
<div class="abs" style="left:1290px;top:214px;width:1px;height:28px;background:#606060"></div>
<div class="abs" style="left:1290px;top:244px;width:1px;height:180px;background:#d8d8d8"></div>
<div class="th" style="left:1420.5px">EVENT CHARGES</div>
<div class="abs" style="left:1414px;top:214px;width:1px;height:28px;background:#606060"></div>
<div class="abs" style="left:1414px;top:244px;width:1px;height:180px;background:#d8d8d8"></div>
<div class="th" style="left:1545.5px">TOTAL CHARGES</div>
<div class="abs" style="left:1539px;top:214px;width:1px;height:28px;background:#606060"></div>
<div class="abs" style="left:1539px;top:244px;width:1px;height:180px;background:#d8d8d8"></div>
<div class="th" style="left:1669.5px">PAYMENTS RECEIVED</div>
<div class="abs" style="left:1663px;top:214px;width:1px;height:28px;background:#606060"></div>
<div class="abs" style="left:1663px;top:244px;width:1px;height:180px;background:#d8d8d8"></div>
<div class="th" style="left:1794.5px">BALANCE DUE</div>
<div class="abs" style="left:1788px;top:214px;width:1px;height:28px;background:#606060"></div>
<div class="abs" style="left:1788px;top:244px;width:1px;height:180px;background:#d8d8d8"></div>
<div class="abs" style="left:1911px;top:213px;width:1px;height:31px;background:#444"></div>
<div class="abs" style="left:1913px;top:213px;width:1px;height:716px;background:#a8a8a8"></div>
<div class="abs" style="left:296px;top:273px;width:1616px;height:1px;background:#d8d8d8"></div>
<div class="td" style="left:299.8px;top:243px;width:117.5px">21 Nov 2024</div>
<div class="td" style="left:423.8px;top:243px;width:118.5px">what the league</div>
<div class="td" style="left:548.8px;top:243px;width:117.5px">ActivityLeague</div>
<div class="td" style="left:672.8px;top:243px;width:118.5px">$ 0.00</div>
<div class="td" style="left:797.8px;top:243px;width:117.5px">$ 0.00</div>
<div class="td" style="left:921.8px;top:243px;width:118.5px">$ 0.00</div>
<div class="td" style="left:1046.8px;top:243px;width:117.5px">$ 0.00</div>
<div class="td" style="left:1170.8px;top:243px;width:118.5px">$ 0.00</div>
<div class="td" style="left:1295.8px;top:243px;width:117.5px">$ 0.00</div>
<div class="td" style="left:1419.8px;top:243px;width:118.5px">$ 0.00</div>
<div class="td" style="left:1544.8px;top:243px;width:117.5px">$ 0.00</div>
<div class="td" style="left:1668.8px;top:243px;width:118.5px">$ 0.00</div>
<div class="td" style="left:1793.8px;top:243px;width:118.5px">$ 0.00</div>
<div class="abs" style="left:296px;top:303px;width:1616px;height:1px;background:#d8d8d8"></div>
<div class="td" style="left:299.8px;top:273px;width:117.5px">07 Nov 2024</div>
<div class="td" style="left:423.8px;top:273px;width:118.5px">xwx</div>
<div class="td" style="left:548.8px;top:273px;width:117.5px">ActivityLeague</div>
<div class="td" style="left:672.8px;top:273px;width:118.5px">$ 0.00</div>
<div class="td" style="left:797.8px;top:273px;width:117.5px">$ 0.00</div>
<div class="td" style="left:921.8px;top:273px;width:118.5px">$ 0.00</div>
<div class="td" style="left:1046.8px;top:273px;width:117.5px">$ 0.00</div>
<div class="td" style="left:1170.8px;top:273px;width:118.5px">$ 0.00</div>
<div class="td" style="left:1295.8px;top:273px;width:117.5px">$ 0.00</div>
<div class="td" style="left:1419.8px;top:273px;width:118.5px">$ 0.00</div>
<div class="td" style="left:1544.8px;top:273px;width:117.5px">$ 0.00</div>
<div class="td" style="left:1668.8px;top:273px;width:118.5px">$ 0.00</div>
<div class="td" style="left:1793.8px;top:273px;width:118.5px">$ 0.00</div>
<div class="abs" style="left:296px;top:333px;width:1616px;height:1px;background:#d8d8d8"></div>
<div class="td" style="left:299.8px;top:303px;width:117.5px">15 Nov 2024</div>
<div class="td" style="left:423.8px;top:303px;width:118.5px">thurs league</div>
<div class="td" style="left:548.8px;top:303px;width:117.5px">ActivityLeague</div>
<div class="td" style="left:672.8px;top:303px;width:118.5px">$ 0.00</div>
<div class="td" style="left:797.8px;top:303px;width:117.5px">$ 0.00</div>
<div class="td" style="left:921.8px;top:303px;width:118.5px">$ 0.00</div>
<div class="td" style="left:1046.8px;top:303px;width:117.5px">$ 0.00</div>
<div class="td" style="left:1170.8px;top:303px;width:118.5px">$ 0.00</div>
<div class="td" style="left:1295.8px;top:303px;width:117.5px">$ 0.00</div>
<div class="td" style="left:1419.8px;top:303px;width:118.5px">$ 0.00</div>
<div class="td" style="left:1544.8px;top:303px;width:117.5px">$ 0.00</div>
<div class="td" style="left:1668.8px;top:303px;width:118.5px">$ 0.00</div>
<div class="td" style="left:1793.8px;top:303px;width:118.5px">$ 0.00</div>
<div class="abs" style="left:296px;top:363px;width:1616px;height:1px;background:#d8d8d8"></div>
<div class="td" style="left:299.8px;top:333px;width:117.5px">21 Nov 2024</div>
<div class="td" style="left:423.8px;top:333px;width:118.5px">tues thurs league</div>
<div class="td" style="left:548.8px;top:333px;width:117.5px">ActivityLeague</div>
<div class="td" style="left:672.8px;top:333px;width:118.5px">$ 0.00</div>
<div class="td" style="left:797.8px;top:333px;width:117.5px">$ 0.00</div>
<div class="td" style="left:921.8px;top:333px;width:118.5px">$ 0.00</div>
<div class="td" style="left:1046.8px;top:333px;width:117.5px">$ 0.00</div>
<div class="td" style="left:1170.8px;top:333px;width:118.5px">$ 0.00</div>
<div class="td" style="left:1295.8px;top:333px;width:117.5px">$ 0.00</div>
<div class="td" style="left:1419.8px;top:333px;width:118.5px">$ 0.00</div>
<div class="td" style="left:1544.8px;top:333px;width:117.5px">$ 0.00</div>
<div class="td" style="left:1668.8px;top:333px;width:118.5px">$ 0.00</div>
<div class="td" style="left:1793.8px;top:333px;width:118.5px">$ 0.00</div>
<div class="abs" style="left:296px;top:393px;width:1616px;height:1px;background:#d8d8d8"></div>
<div class="td" style="left:299.8px;top:363px;width:117.5px">15 Nov 2024</div>
<div class="td" style="left:423.8px;top:363px;width:118.5px">Toptracer League</div>
<div class="td" style="left:548.8px;top:363px;width:117.5px">ActivityLeague</div>
<div class="td" style="left:672.8px;top:363px;width:118.5px">$ 0.00</div>
<div class="td" style="left:797.8px;top:363px;width:117.5px">$ 0.00</div>
<div class="td" style="left:921.8px;top:363px;width:118.5px">$ 800.00</div>
<div class="td" style="left:1046.8px;top:363px;width:117.5px">$ 800.00</div>
<div class="td" style="left:1170.8px;top:363px;width:118.5px">$ 0.00</div>
<div class="td" style="left:1295.8px;top:363px;width:117.5px">$ 75.60</div>
<div class="td" style="left:1419.8px;top:363px;width:118.5px">$ 0.00</div>
<div class="td" style="left:1544.8px;top:363px;width:117.5px">$ 875.60</div>
<div class="td" style="left:1668.8px;top:363px;width:118.5px">$ 240.79</div>
<div class="td" style="left:1793.8px;top:363px;width:118.5px">$ 634.81</div>
<div class="abs" style="left:296px;top:423px;width:1616px;height:1px;background:#d8d8d8"></div>
<div class="td" style="left:299.8px;top:393px;width:117.5px">28 Nov 2024</div>
<div class="td" style="left:423.8px;top:393px;width:118.5px">Thursday Night League</div>
<div class="td" style="left:548.8px;top:393px;width:117.5px">GolfLeague</div>
<div class="td" style="left:672.8px;top:393px;width:118.5px">$ 0.00</div>
<div class="td" style="left:797.8px;top:393px;width:117.5px">$ 0.00</div>
<div class="td" style="left:921.8px;top:393px;width:118.5px">$ 18,200.00</div>
<div class="td" style="left:1046.8px;top:393px;width:117.5px">$ 18,200.00</div>
<div class="td" style="left:1170.8px;top:393px;width:118.5px">$ 0.00</div>
<div class="td" style="left:1295.8px;top:393px;width:117.5px">$ 1,720.60</div>
<div class="td" style="left:1419.8px;top:393px;width:118.5px">$ 0.00</div>
<div class="td" style="left:1544.8px;top:393px;width:117.5px">$ 19,920.60</div>
<div class="td" style="left:1668.8px;top:393px;width:118.5px">$ 0.00</div>
<div class="td" style="left:1793.8px;top:393px;width:118.5px">$ 19,920.60</div>
<div class="abs" style="left:294px;top:848px;width:1619px;height:40px;background:#d4d4d4;border:1px solid #222"></div>
<div class="tt" style="left:418px;width:125px;text-align:center;letter-spacing:-0.35px">Totals :</div>
<div class="tt" style="left:668.0px">$0.00</div>
<div class="tt" style="left:793.0px">$0.00</div>
<div class="tt" style="left:917.0px">$19,000.00</div>
<div class="tt" style="left:1042.0px">$19,000.00</div>
<div class="tt" style="left:1166.0px">$0.00</div>
<div class="tt" style="left:1291.0px">$1,796.20</div>
<div class="tt" style="left:1415.0px">$0.00</div>
<div class="tt" style="left:1540.0px">$20,796.20</div>
<div class="tt" style="left:1664.0px">$240.79</div>
<div class="tt" style="left:1789.0px">$20,555.41</div>
<svg class="abs" style="left:305px;top:902px" width="20" height="12"><path d="M0 10.7 L9.1 1 L18.2 10.7 Z" fill="#000"/></svg>
<div class="ft" style="left:334px;top:901px">Total Pages : 1 | Page :</div>
<svg class="abs" style="left:473px;top:902px" width="20" height="12"><path d="M0 1 H18.2 L9.1 10.7 Z" fill="#000"/></svg>
<svg class="abs" style="left:1874px;top:896px" width="24" height="24"><rect x="14.2" y="3.9" width="8.7" height="16" fill="#0f7040"/><rect x="14.7" y="5.4" width="2.4" height="1.6" fill="#fff"/><rect x="17.9" y="5.4" width="3.2" height="1.6" fill="#fff"/><rect x="14.7" y="8.3" width="2.4" height="1.6" fill="#fff"/><rect x="17.9" y="8.3" width="3.2" height="1.6" fill="#fff"/><rect x="14.7" y="11.2" width="2.4" height="1.6" fill="#fff"/><rect x="17.9" y="11.2" width="3.2" height="1.6" fill="#fff"/><rect x="14.7" y="14.1" width="2.4" height="1.6" fill="#fff"/><rect x="17.9" y="14.1" width="3.2" height="1.6" fill="#fff"/><rect x="14.7" y="17.0" width="2.4" height="1.6" fill="#fff"/><rect x="17.9" y="17.0" width="3.2" height="1.6" fill="#fff"/><path d="M2.1 3.8 L13.7 1.9 V21.7 L2.1 20.1 Z" fill="#0f7040"/><text x="0" y="0" transform="translate(7.8 16.1) scale(0.8 1)" font-family="Liberation Sans" font-size="10.8" fill="#fff" stroke="#fff" stroke-width="0.2" text-anchor="middle">X</text></svg>
<div class="abs" style="left:294px;top:927px;width:1620px;height:2px;background:#f4f4f4"></div>
<div class="abs" style="left:327px;top:151px;width:1034px;height:69px;border:6px solid #fd3f40;box-shadow:2px 3px 6px rgba(0,0,0,0.45), inset 2px 3px 6px rgba(0,0,0,0.45)"></div>
</body></html>
